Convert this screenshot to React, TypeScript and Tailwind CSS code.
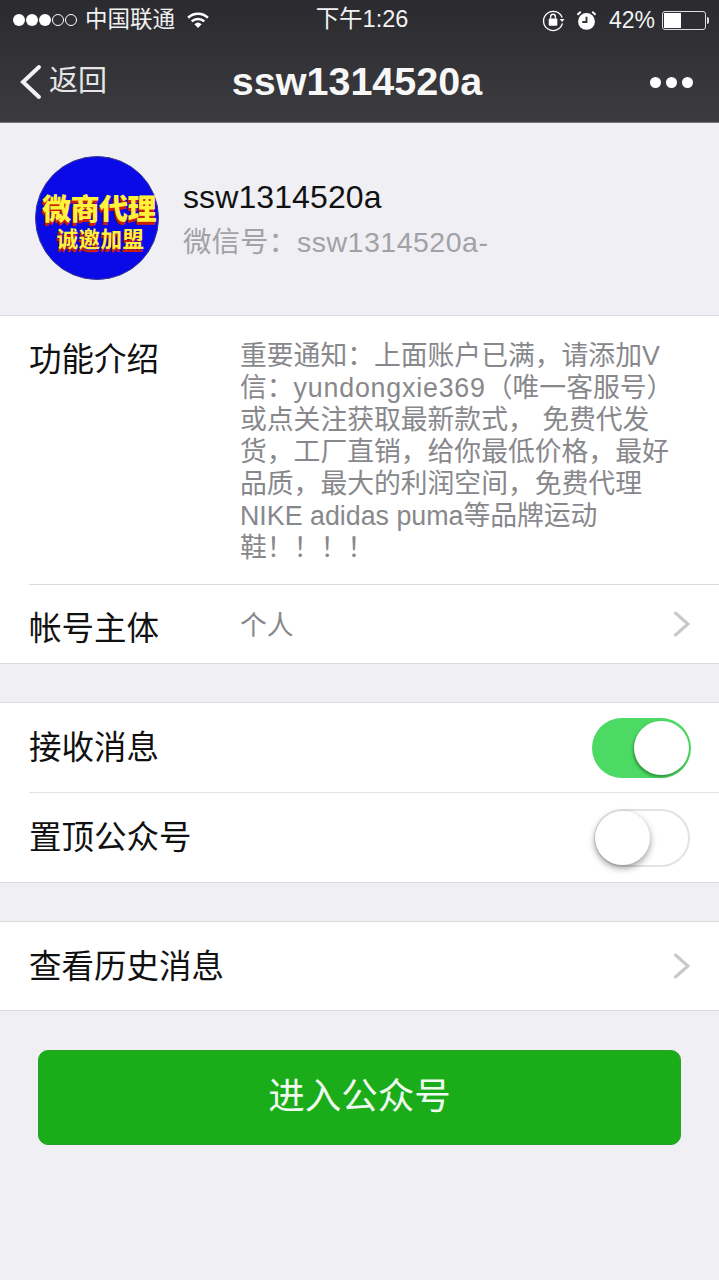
const font = { fontFamily: '"Liberation Sans", "Noto Sans CJK SC", sans-serif' }

const titleDots = [0, 1, 2]

function StatusBar() {
  return (
    <div className="flex h-[40px] items-center justify-between pl-[13px] pr-[10px] text-[#f2f2f2]">
      <div className="flex w-[260px] items-center">
        <div className="flex items-center gap-[1px]">
          <span className="h-[12px] w-[12px] rounded-full bg-white" />
          <span className="h-[12px] w-[12px] rounded-full bg-white" />
          <span className="h-[12px] w-[12px] rounded-full bg-white" />
          <span className="h-[12px] w-[12px] rounded-full border border-white" />
          <span className="h-[12px] w-[12px] rounded-full border border-white" />
        </div>
        <span className="ml-[8px] text-[22.5px] leading-none">中国联通</span>
        <svg className="ml-[11px]" width="24" height="18" viewBox="0 0 26 20" fill="none" stroke="white" strokeWidth="2.8">
          <path d="M2 7.5a16 16 0 0 1 22 0" />
          <path d="M6 11.5a10.5 10.5 0 0 1 14 0" />
          <path d="M13 19l-4-4.4a6 6 0 0 1 8 0z" fill="white" stroke="none" />
        </svg>
      </div>
      <span className="ml-[2px] text-[23.5px] leading-none">下午1:26</span>
      <div className="flex w-[260px] items-center justify-end">
        <svg width="23" height="23" viewBox="0 0 24 24" fill="none" stroke="white" strokeWidth="1.4">
          <path d="M21 9a10 10 0 1 0 .3 6" />
          <path d="M18.5 10.5h5l-2.500 3z" fill="white" stroke="none" />
          <rect x="7" y="10" width="9" height="7.500" rx="1" fill="white" stroke="none" />
          <path d="M9 10V8a2.500 2.500 0 0 1 5 0v2" />
        </svg>
        <svg className="ml-[11px]" width="21" height="21" viewBox="0 0 22 22" fill="none">
          <circle cx="11" cy="12" r="8.800" fill="white" />
          <path d="M11 7v5.500H6.500" stroke="#333338" strokeWidth="2" />
          <path d="M1.500 5L5 1.800M20.500 5L17 1.800" stroke="white" strokeWidth="2" />
        </svg>
        <span className="ml-[12px] text-[23px] leading-none">42%</span>
        <div className="ml-[7px] flex h-[19px] w-[44px] rounded-[3px] border border-[#dddddd] p-[1px]">
          <div className="h-full w-[17px] bg-white" />
        </div>
        <div className="ml-[1px] h-[7px] w-[2px] rounded-r-sm bg-[#dddddd]" />
      </div>
    </div>
  )
}

function NavBar() {
  return (
    <div className="relative flex h-[82px] items-center justify-between pt-[2px]">
      <div className="flex items-center">
        <svg className="ml-[20px]" width="22" height="36" viewBox="0 0 22 36" fill="none" stroke="#f2f2f2" strokeWidth="4" strokeLinecap="round">
          <path d="M19 3L3 18l16 15" />
        </svg>
        <span className="ml-[7px] text-[29px] text-[#e6e6e6]">返回</span>
      </div>
      <span className="absolute left-0 right-[5px] text-center text-[39.500px] font-bold text-[#f7f7f7]">ssw1314520a</span>
      <div className="mr-[26px] flex gap-[5px]">
        {titleDots.map((dot) => (
          <span key={dot} className="h-[11px] w-[11px] rounded-full bg-white" />
        ))}
      </div>
    </div>
  )
}

function Avatar() {
  return (
    <div className="flex h-[124px] w-[124px] shrink-0 flex-col items-center justify-center rounded-full border border-[#3a3a90] bg-[#0a0ae6] pt-[11px]">
      <span className="pl-[4px] text-[29px] font-black leading-[33px] tracking-[-0.5px] text-[#fff23a] [text-shadow:-1px_3px_0_#c81e0a]">微商代理</span>
      <span className="pl-[7px] text-[21.5px] font-bold leading-[26px] tracking-[0.5px] text-[#fff23a] [text-shadow:-1px_3px_0_#c81e0a]">诚邀加盟</span>
    </div>
  )
}

function Switch({ on }: { on: boolean }) {
  if (on) {
    return (
      <div className="flex h-[60px] w-[99px] items-center justify-end rounded-full bg-[#4cd964] pr-[2px]">
        <div className="h-[54px] w-[55px] rounded-full bg-white shadow-[-1px_2px_3px_rgba(0,60,0,0.45)]" />
      </div>
    )
  }
  return (
    <div className="flex h-[58px] w-[96px] rounded-full border-2 border-[#e3e3e5] bg-white">
      <div className="-ml-[1px] h-[54px] w-[55px] rounded-full bg-white shadow-[0_3px_7px_rgba(0,0,0,0.4)]" />
    </div>
  )
}

function RowArrow() {
  return (
    <svg width="18" height="26" viewBox="0 0 18 26" fill="none" stroke="#c7c7cc" strokeWidth="3" strokeLinecap="round">
      <path d="M2.500 2L15 13 2.500 24" />
    </svg>
  )
}

export default function App() {
  return (
    <div className="flex h-[1280px] w-[719px] flex-col overflow-hidden bg-[#efeff4]" style={font}>
      <div className="h-[123px] shrink-0 border-b border-[#77777b] bg-gradient-to-b from-[#2a2a2f] to-[#3b3b40]">
        <StatusBar />
        <NavBar />
      </div>

      <div className="flex h-[193px] shrink-0 items-center border-b border-[#dcdce0] pb-[3px] pl-[35px]">
        <Avatar />
        <div className="ml-[24px]">
          <p className="text-[32px] leading-[40px] tracking-[0.1px] text-[#111111]">ssw1314520a</p>
          <p className="mt-[8px] text-[28.500px] leading-[34px] text-[#a2a2a6]">
            微信号：<span className="tracking-[0.5px]">ssw1314520a-</span>
          </p>
        </div>
      </div>

      <div className="shrink-0 border-b border-[#dcdce0] bg-white">
        <div className="ml-[29px] flex h-[269px] border-b border-[#dcdce0]">
          <span className="w-[211px] pt-[24px] text-[32.500px] leading-[40px] text-[#111111]">功能介绍</span>
          <div className="whitespace-pre pt-[24px] text-[26.800px] leading-[32px] text-[#88888c]">
            <p>重要通知：上面账户已满，请添加V</p>
            <p>信：<span className="tracking-[0.8px]">yundongxie369</span>（唯一客服号）</p>
            <p>或点关注获取最新款式， 免费代发</p>
            <p>货，工厂直销，给你最低价格，最好</p>
            <p>品质，最大的利润空间，免费代理</p>
            <p>NIKE adidas puma等品牌运动</p>
            <p>鞋！！！！</p>
          </div>
        </div>
        <div className="ml-[29px] flex h-[78px] items-center pr-[28px]">
          <span className="mt-[9px] w-[211px] text-[32.500px] leading-[40px] text-[#111111]">帐号主体</span>
          <span className="mt-[3px] flex-1 text-[26.800px] leading-[32px] text-[#88888c]">个人</span>
          <RowArrow />
        </div>
      </div>

      <div className="mt-[38px] shrink-0 border-y border-[#dcdce0] bg-white">
        <div className="ml-[29px] flex h-[90px] items-center justify-between border-b border-[#e2e2e6] pr-[28px]">
          <span className="mt-[2px] text-[32.500px] text-[#111111]">接收消息</span>
          <Switch on />
        </div>
        <div className="ml-[29px] flex h-[89px] items-center justify-between pr-[29px]">
          <span className="mt-[2px] text-[32.500px] text-[#111111]">置顶公众号</span>
          <Switch on={false} />
        </div>
      </div>

      <div className="mt-[38px] flex h-[90px] shrink-0 items-center justify-between border-y border-[#dcdce0] bg-white pl-[29px] pr-[28px]">
        <span className="mt-[2px] text-[32.500px] text-[#111111]">查看历史消息</span>
        <RowArrow />
      </div>

      <button
        type="button"
        className="mx-[38px] mt-[39px] h-[95px] shrink-0 rounded-[10px] border border-[#2ba02b] bg-[#1aad19] text-[36.500px] text-[#f0faf0]"
      >
        进入公众号
      </button>
    </div>
  )
}
